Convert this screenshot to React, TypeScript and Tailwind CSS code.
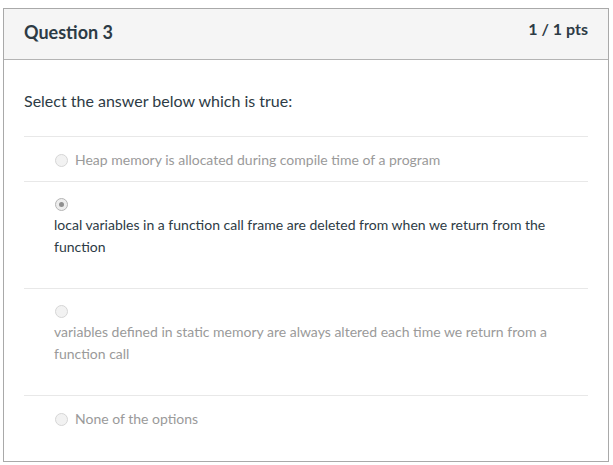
type Answer = {
  id: number;
  text: string;
  selected?: boolean;
  long?: boolean;
};

const answers: Answer[] = [
  { id: 1, text: "Heap memory is allocated during compile time of a program" },
  {
    id: 2,
    text: "local variables in a function call frame are deleted from when we return from the function",
    selected: true,
    long: true,
  },
  {
    id: 3,
    text: "variables defined in static memory are always altered each time we return from a function call",
    long: true,
  },
  { id: 4, text: "None of the options" },
];

function Radio({ checked }: { checked?: boolean }) {
  return (
    <span
      className={
        "ml-px flex h-[13px] w-[13px] shrink-0 items-center justify-center rounded-full border " +
        (checked ? "border-[#b5b5b5] bg-[#ededed]" : "border-[#d6d6d6] bg-[#f2f2f2]")
      }
    >
      {checked && <span className="h-[5px] w-[5px] rounded-full bg-[#8f8f8f]" />}
    </span>
  );
}

function AnswerRow({ answer }: { answer: Answer }) {
  const color = answer.selected ? "text-[#2d3b45]" : "text-[#9a9a9a]";
  if (answer.long) {
    return (
      <div className="border-t border-[#e8e8e8] pl-[30px] pt-3 pb-[30px]">
        <div className="flex h-5 items-center">
          <Radio checked={answer.selected} />
        </div>
        <div className={"text-[14px] leading-[22px] " + color}>{answer.text}</div>
      </div>
    );
  }
  return (
    <div className="border-t border-[#e8e8e8] pl-[30px] pt-3 pb-[10px]">
      <div className="flex h-[22px] items-center gap-[7px]">
        <Radio checked={answer.selected} />
        <span className={"text-[14px] leading-[22px] " + color}>{answer.text}</span>
      </div>
    </div>
  );
}

export default function App() {
  return (
    <div
      className="min-h-[465px] bg-white pt-2 pl-[3px] pr-[4px]"
      style={{ fontFamily: "Lato, 'Open Sans', sans-serif" }}
    >
      <div className="h-[454px] border border-[#a9a9a9] bg-white">
        <div className="flex h-[51px] items-start justify-between border-b border-[#b4b4b4] bg-[#f5f5f5] px-5">
          <h2 className="mt-[10px] text-[18px] font-bold leading-[26px] text-[#2d3b45]">
            Question 3
          </h2>
          <span className="mt-[9px] text-[16px] font-bold leading-[22px] text-[#2d3b45]">
            1 / 1 pts
          </span>
        </div>

        <div className="px-5 pt-[30px]">
          <p className="text-[16px] leading-[22px] text-[#2d3b45]">
            Select the answer below which is true:
          </p>
          <div className="mt-[24px]">
            {answers.map((a) => (
              <AnswerRow key={a.id} answer={a} />
            ))}
          </div>
        </div>
      </div>
    </div>
  );
}
